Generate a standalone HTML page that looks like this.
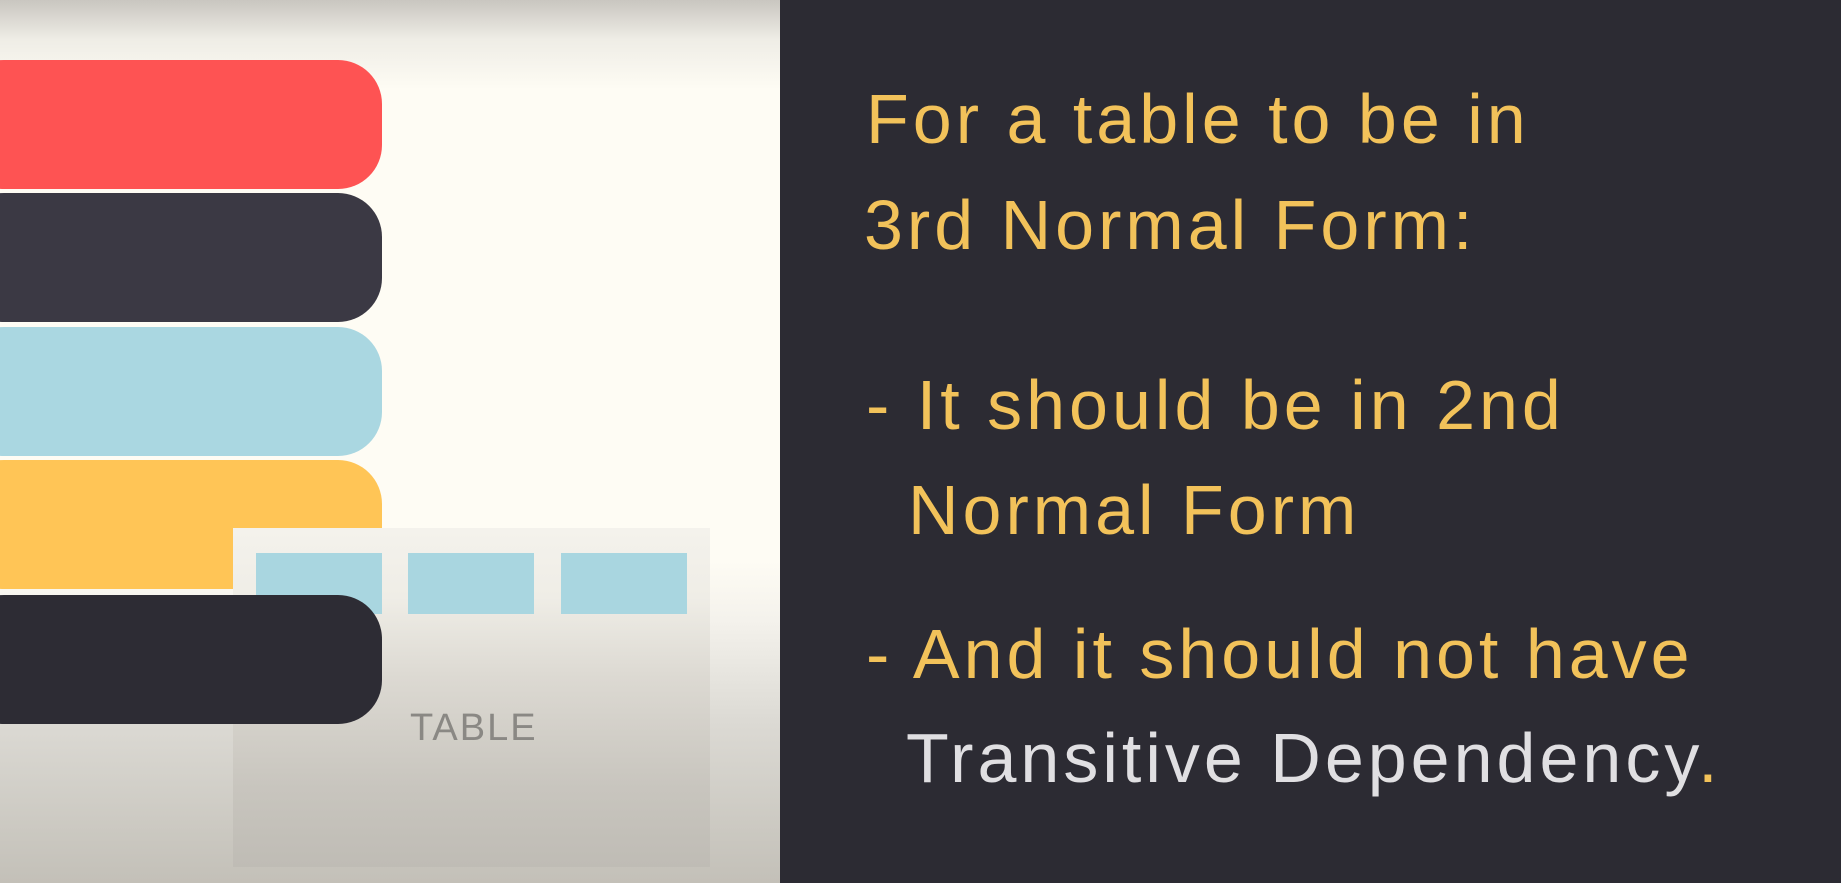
<!DOCTYPE html>
<html><head><style>
html,body{margin:0;padding:0;width:1841px;height:883px;overflow:hidden;}
body{position:relative;background:#2c2b33;font-family:"Liberation Sans",sans-serif;}
#left{position:absolute;left:0;top:0;width:780px;height:883px;
background:linear-gradient(to bottom,#c9c6c0 0px,#efede6 40px,#fefcf4 90px,#fefcf4 560px,#f4f2ec 620px,#dcdad4 720px,#c3c0b8 883px);}
.bar{position:absolute;left:-40px;width:422px;height:129px;border-radius:44px;}
.tbl{position:absolute;left:233px;top:528px;width:477px;height:339px;
background:linear-gradient(to bottom,#f4f2ec 0,#efede6 70px,#dcd9d2 150px,#c8c5be 260px,#bfbcb5 339px);}
.cell{position:absolute;top:553px;width:126px;height:61px;background:#a9d6e0;}
.t{position:absolute;color:#f2c25a;font-size:70px;letter-spacing:4px;white-space:nowrap;line-height:1;}
</style></head><body>
<div id="left">
<div class="bar" style="top:60px;background:#fe5353;"></div>
<div class="bar" style="top:193px;background:#3b3944;"></div>
<div class="bar" style="top:327px;background:#aad7e1;"></div>
<div class="bar" style="top:460px;background:#ffc556;"></div>
<div class="tbl"></div>
<div class="cell" style="left:256px"></div>
<div class="cell" style="left:408px"></div>
<div class="cell" style="left:561px"></div>
<div class="bar" style="top:595px;background:#2d2c34;"></div>
<div style="position:absolute;left:410px;top:707px;font-size:38px;color:#8a8884;letter-spacing:2px;">TABLE</div>
</div>
<div class="t" style="left:866px;top:84px;">For a table to be in</div>
<div class="t" style="left:864px;top:190px;">3rd Normal Form:</div>
<div class="t" style="left:866px;top:370px;">- It should be in 2nd</div>
<div class="t" style="left:908px;top:475px;">Normal Form</div>
<div class="t" style="left:866px;top:619px;">- And it should not have</div>
<div class="t" style="left:906px;top:723px;color:#e0dfe2;">Transitive Dependency<span style="color:#f2c25a">.</span></div>
</body></html>
